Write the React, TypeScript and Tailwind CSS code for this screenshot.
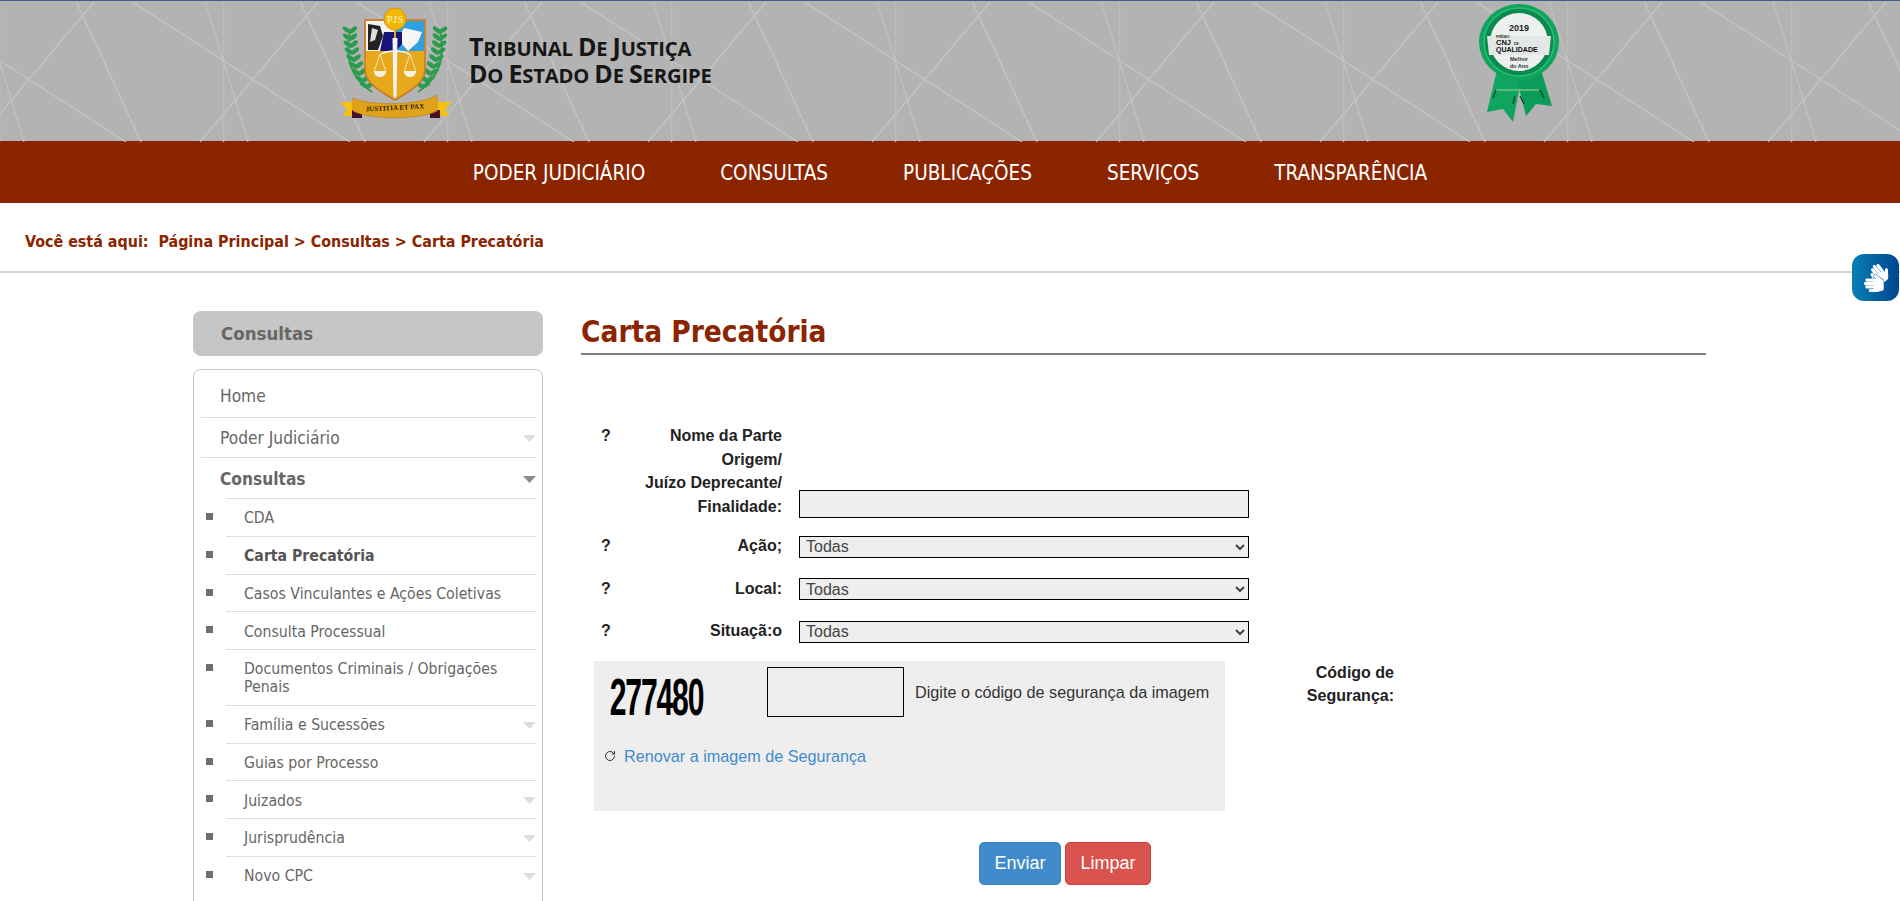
import React from "react";
import { FaSignLanguage } from "react-icons/fa";
import { RotateCw } from "lucide-react";

const tahoma = "font-['DejaVu_Sans_Condensed','DejaVu_Sans',sans-serif]";

const navItems = ["PODER JUDICIÁRIO", "CONSULTAS", "PUBLICAÇÕES", "SERVIÇOS", "TRANSPARÊNCIA"];

const subItems = [
  { label: "CDA" },
  { label: "Carta Precatória", active: true },
  { label: "Casos Vinculantes e Ações Coletivas" },
  { label: "Consulta Processual" },
  { label: "Documentos Criminais / Obrigações Penais" },
  { label: "Família e Sucessões", arrow: true },
  { label: "Guias por Processo" },
  { label: "Juizados", arrow: true },
  { label: "Jurisprudência", arrow: true },
  { label: "Novo CPC", arrow: true },
];

const Arrow = ({ dark }: { dark?: boolean }) => (
  <svg width="13" height="7" viewBox="0 0 13 7" className="shrink-0">
    <path d="M0 0h13L6.5 7z" fill={dark ? "#8c8c8c" : "#dcdcdc"} />
  </svg>
);

// header background: the same four lines repeat every 224px
const HeaderLines = () => {
  const tiles = Array.from({ length: 10 }, (_, i) => (i - 1) * 224);
  return (
    <svg className="absolute inset-0" width="1900" height="141" viewBox="0 0 1900 141">
      {tiles.map((x) => (
        <g key={x} fill="none">
          <path d={`M${x + 223.5} 0V141`} stroke="#bcbcbc" strokeWidth="1.5" />
          <path d={`M${x + 131} 0L${x + 350} 141`} stroke="#c6c6c6" strokeWidth="1.2" />
          <path d={`M${x + 76} 0L${x + 141} 141`} stroke="#c6c6c6" strokeWidth="1.2" />
          <path d={`M${x + 95} 0L${x - 24} 141`} stroke="#c6c6c6" strokeWidth="1.2" />
          <path d={`M${x + 205} 0L${x + 248} 141`} stroke="#c2c2c2" strokeWidth="1.2" />
        </g>
      ))}
    </svg>
  );
};

const Laurel = ({ flip }: { flip?: boolean }) => {
  const leaves = [26, 33, 40, 47, 54, 61, 68, 75, 81];
  return (
    <g transform={flip ? "translate(790 0) scale(-1 1)" : undefined} fill="#2b9c4c">
      <path d="M350 28C345 52 350 74 372 88" fill="none" stroke="#2b9c4c" strokeWidth="1.8" />
      {leaves.map((y, i) => {
        const x = 349 + Math.pow(i / 8, 2.2) * 17;
        return (
          <g key={y}>
            <ellipse cx={x - 2} cy={y} rx="5" ry="2.2" transform={`rotate(35 ${x - 2} ${y})`} />
            <ellipse cx={x + 4} cy={y} rx="5" ry="2.2" transform={`rotate(-40 ${x + 4} ${y})`} />
          </g>
        );
      })}
    </g>
  );
};

const Crest = () => (
  <svg width="112" height="116" viewBox="340 0 112 116" className="shrink-0">
    <Laurel />
    <Laurel flip />
    <path d="M365 16H425V66C425 80 405 90 395 96C385 90 365 80 365 66Z" fill="#e8a81c" stroke="#c9781e" strokeWidth="1.5" />
    <path d="M366 17H394V47H366Z" fill="#f4f4f4" />
    <path d="M396 17H424V47H396Z" fill="#2f9fe0" />
    <path d="M404 24L422 28L418 38L408 47L402 40L398 34Z" fill="#f6f6f6" />
    <path d="M368 20L380 22L383 32L378 46L368 46Z" fill="#222" />
    <path d="M372 24L378 26L375 36L370 38Z" fill="#ddd" />
    <path d="M384 28H394V47H380Z" fill="#14147a" />
    <path d="M396 28H402V40L396 47Z" fill="#14147a" />
    <circle cx="395" cy="15" r="11" fill="#f2b705" stroke="#d9960a" />
    <text x="395" y="19" textAnchor="middle" fontSize="11" fontFamily="'Liberation Serif',serif" fill="#fff3c4">PJS</text>
    <path d="M392.5 34H397.5L396.5 92L395 95L393.5 92Z" fill="#f4f4f4" />
    <path d="M381 50C388 46 402 46 409 50" fill="none" stroke="#f4f4f4" strokeWidth="1.5" />
    <path d="M380 50L374 68H386Z M410 50L404 68H416Z" fill="none" stroke="#f4f0dd" strokeWidth="0.8" />
    <path d="M374 67H386C386 75 374 75 374 67Z M404 67H416C416 75 404 75 404 67Z" fill="#f6f1e0" />
    <path d="M340 98H356V112H343L347 105Z M452 98H436V112H449L445 105Z" fill="#f6c20f" />
    <path d="M352 106H362V114H352Z M430 106H440V114H430Z" fill="#4a1030" />
    <path d="M353 94C370 102 420 102 437 91V107C420 116 370 116 353 107Z" fill="#dfa21a" stroke="#b9820f" strokeWidth="0.6" />
    <text x="395" y="106" textAnchor="middle" fontSize="7" fontWeight="700" fontFamily="'Liberation Serif',serif" fill="#2a1a08" transform="rotate(-3 395 106)">JUSTITIA ET PAX</text>
  </svg>
);

const Award = () => (
  <svg width="82" height="122" viewBox="1479 2 82 122" className="shrink-0">
    <path d="M1498 70L1488 112L1504 109L1514 122L1522 80Z" fill="#0fa45f" />
    <path d="M1542 70L1553 106L1537 104L1527 116L1518 80Z" fill="#0c9c59" />
    <path d="M1497 90L1540 90" stroke="#7bc47f" strokeWidth="1.5" />
    <path d="M1497 90L1494 98M1516 96L1514 104M1521 96L1525 104M1541 90L1545 98" stroke="#0b3d2a" strokeWidth="1.2" />
    <ellipse cx="1520" cy="42" rx="40" ry="38" fill="#0ea45c" />
    <ellipse cx="1520" cy="42" rx="35" ry="34" fill="#0c8a4e" stroke="#26c07a" strokeWidth="1.5" />
    <circle cx="1520" cy="42" r="29" fill="#eef0ef" />
    <path d="M1488 36H1552L1550 55H1490Z" fill="#e3e7e5" />
    <text x="1520" y="31" textAnchor="middle" fontSize="9" fontWeight="700" fontFamily="'Liberation Sans',sans-serif" fill="#222">2019</text>
    <text x="1497" y="38" fontSize="3.5" fontWeight="700" fontFamily="'Liberation Sans',sans-serif" fill="#333">PRÊMIO</text>
    <text x="1497" y="45" fontSize="7.5" fontWeight="700" fontFamily="'Liberation Sans',sans-serif" fill="#111">CNJ</text>
    <text x="1515" y="44.5" fontSize="3.5" fontWeight="700" fontFamily="'Liberation Sans',sans-serif" fill="#333">DE</text>
    <text x="1497" y="52" fontSize="7" fontWeight="700" fontFamily="'Liberation Sans',sans-serif" fill="#111">QUALIDADE</text>
    <text x="1520" y="61" textAnchor="middle" fontSize="5.5" fontWeight="700" fontFamily="'Liberation Sans',sans-serif" fill="#333">Melhor</text>
    <text x="1520" y="67.5" textAnchor="middle" fontSize="5.5" fontWeight="700" fontFamily="'Liberation Sans',sans-serif" fill="#333">do Ano</text>
  </svg>
);

// big first letters of the logo wordmark
const Cap = ({ children }: { children: React.ReactNode }) => (
  <span className="inline-block text-[25px] leading-[22px]">{children}</span>
);

const FieldRow = ({ label, children }: { label: React.ReactNode; children: React.ReactNode }) => (
  <div className="flex items-end">
    <div className="w-[31px] self-start pl-5 text-[16px] font-bold leading-[23.5px] text-[#222]">?</div>
    <div className="w-[170px] text-right text-[16px] font-bold leading-[23.5px] text-[#222]">{label}</div>
    <div className="ml-[17px] w-[450px]">{children}</div>
  </div>
);

const TodasSelect = () => (
  <select className="block h-[22px] w-full border border-black bg-[#eeeeee] pl-[2px] text-[16px] text-[#444]">
    <option>Todas</option>
  </select>
);

export default function App() {
  return (
    <div className="relative h-screen overflow-hidden bg-white font-['Liberation_Sans',Arial,sans-serif]">
      {/* HEADER */}
      <header className="relative flex h-[141px] items-start border-t border-[#3d6088] bg-[#b3b3b3] pl-[340px] pr-[340px]">
        <HeaderLines />
        <div className="relative flex items-start pt-[3px]">
          <Crest />
          <div className="ml-[17px] mt-[31px] whitespace-nowrap font-['Open_Sans',sans-serif] text-[20.2px] font-bold leading-[27px] tracking-[-0.15px] text-[#161616]">
            <div><Cap>T</Cap>RIBUNAL <Cap>D</Cap>E <Cap>J</Cap>USTIÇA</div>
            <div><Cap>D</Cap>O <Cap>E</Cap>STADO <Cap>D</Cap>E <Cap>S</Cap>ERGIPE</div>
          </div>
        </div>
        <div className="relative ml-auto pt-[1px]">
          <Award />
        </div>
      </header>

      {/* NAV */}
      <nav className={`flex h-[62px] items-center justify-center gap-[75px] bg-[#8a2500] pt-[2px] text-[20.5px] text-white ${tahoma}`}>
        {navItems.map((item) => (
          <a key={item} href="#">{item}</a>
        ))}
      </nav>

      {/* BREADCRUMB */}
      <div className={`flex h-[70px] items-center border-b-2 border-[#d4d4d4] pt-[9px] pl-[25px] text-[15.9px] font-bold text-[#8a2500] ${tahoma}`}>
        <span className="whitespace-pre">Você está aqui:  Página Principal &gt; Consultas &gt; Carta Precatória</span>
      </div>

      <div className="flex pl-[193px] pt-[38px]">
        {/* SIDEBAR */}
        <aside className={`w-[350px] shrink-0 ${tahoma}`}>
          <div className="flex h-[45px] items-center rounded-lg bg-[#c6c6c6] pl-7 text-[18.5px] font-bold text-[#666666]">
            Consultas
          </div>
          <div className="mt-[13px] rounded-lg border border-[#c8c8c8] pb-10 pl-[7px] pr-[6px] pt-[1px] text-[#666666]">
            <div className="flex h-[47px] items-center border-b border-[#dddddd] pl-[19px] pt-[6px] text-[17.2px]">Home</div>
            <div className="flex h-[40px] items-center justify-between border-b border-[#dddddd] pl-[19px] pt-[2px] text-[17.2px]">
              Poder Judiciário
              <Arrow />
            </div>
            <div className="flex h-[40px] items-center justify-between pl-[19px] pt-[3px] text-[17.2px] font-bold">
              Consultas
              <Arrow dark />
            </div>
            {subItems.map((item) => (
              <div key={item.label} className="flex">
                <div className="w-[25px] shrink-0 pl-[5px] pt-[15px]">
                  <div className="h-[7px] w-[7px] bg-[#6e6e6e]" />
                </div>
                <div className={`flex flex-1 items-center justify-between border-t border-[#dddddd] pb-[8.6px] pl-[18px] pt-[10.2px] text-[15.7px] leading-[18px] ${item.active ? "font-bold text-[#555555]" : ""}`}>
                  <span className="max-w-[280px]">{item.label}</span>
                  {item.arrow && <Arrow />}
                </div>
              </div>
            ))}
          </div>
        </aside>

        {/* MAIN */}
        <main className="ml-[38px] w-[1125px]">
          <h1 className={`h-[44px] border-b-2 border-[#808080] text-[29.5px] font-bold leading-[42px] text-[#8a2500] ${tahoma}`}>
            Carta Precatória
          </h1>

          <div className="mt-[69px]">
            <FieldRow
              label={
                <>
                  Nome da Parte<br />Origem/<br />Juízo Deprecante/<br />Finalidade:
                </>
              }
            >
              <input className="block h-[28px] w-full border border-black bg-[#eeeeee]" />
            </FieldRow>
            <div className="mt-[16px] flex flex-col gap-[19px]">
              <FieldRow label="Ação;"><TodasSelect /></FieldRow>
              <FieldRow label="Local:"><TodasSelect /></FieldRow>
              <FieldRow label="Situaçã:o"><TodasSelect /></FieldRow>
            </div>

            {/* CAPTCHA */}
            <div className="mt-[18px] flex items-start">
              <div className="ml-[13px] h-[150px] w-[631px] shrink-0 bg-[#eeeeee] pt-[6px]">
                <div className="flex items-start">
                  <div className="w-[173px] shrink-0 origin-left scale-x-[0.58] pl-[27px] pt-[8px] text-[52px] font-bold leading-[44px] tracking-[-2px] text-black">
                    277480
                  </div>
                  <input className="h-[50px] w-[137px] shrink-0 border border-black bg-[#eeeeee]" />
                  <span className="ml-[11px] pt-[13px] text-[16.2px] text-[#333333]">Digite o código de segurança da imagem</span>
                </div>
                <a href="#" className="mt-[28px] flex items-center pl-[10px] text-[16.2px] leading-[18px] text-[#428bca]">
                  <RotateCw size={12} strokeWidth={2} className="mr-[8px] text-[#333333]" />
                  Renovar a imagem de Segurança
                </a>
              </div>
              <div className="w-[169px] text-right text-[16px] font-bold leading-[23px] text-[#222]">
                Código de<br />Segurança:
              </div>
            </div>

            <div className="ml-[398px] mt-[31px] flex gap-[4px]">
              <button className="h-[43px] w-[82px] rounded-[5px] border border-[#3f86c4] bg-[#428bca] text-[18px] text-white">Enviar</button>
              <button className="h-[43px] w-[86px] rounded-[5px] border border-[#d43f3a] bg-[#d9534f] text-[18px] text-white">Limpar</button>
            </div>
          </div>
        </main>
      </div>

      {/* LIBRAS WIDGET */}
      <div className="absolute right-[1px] top-[254px] flex h-[47px] w-[47px] items-center justify-center rounded-xl bg-gradient-to-r from-[#0a80b4] to-[#03458f]">
        <FaSignLanguage size={28} className="text-white" />
      </div>
    </div>
  );
}
